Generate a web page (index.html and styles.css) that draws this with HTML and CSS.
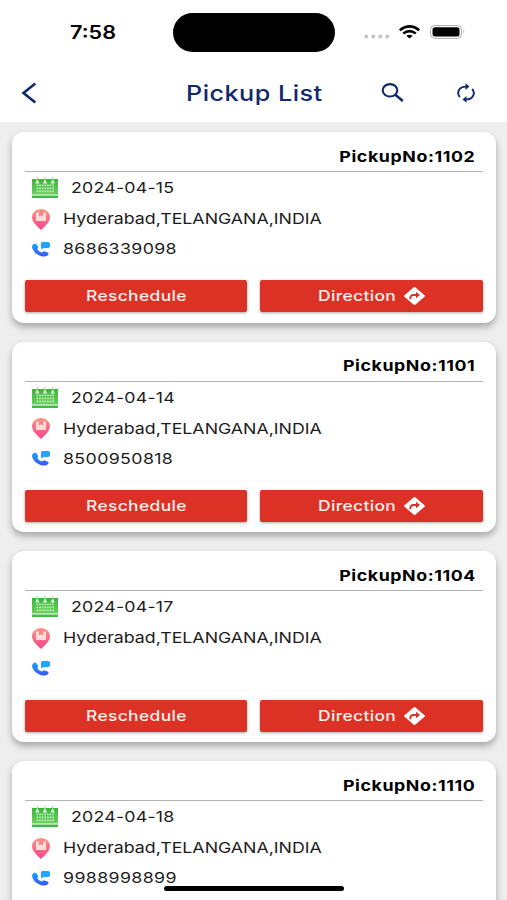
FILE: index.html
```
<!DOCTYPE html>
<html lang="en">
<head>
<meta charset="utf-8">
<title>Pickup List</title>
<link rel="stylesheet" href="styles.css">
</head>
<body>
<svg class="defs" width="0" height="0" aria-hidden="true">
  <defs>
    <linearGradient id="green" x1="0" y1="0" x2="0" y2="1"><stop offset="0" stop-color="#38b53d"/><stop offset="1" stop-color="#6ccf5c"/></linearGradient>
    <linearGradient id="pink" x1="0" y1="0" x2="0" y2="1"><stop offset="0" stop-color="#fa9583"/><stop offset="1" stop-color="#f8438c"/></linearGradient>
    <linearGradient id="blue" x1="0" y1="0" x2="0" y2="1"><stop offset="0" stop-color="#17a2ff"/><stop offset="1" stop-color="#3b55f5"/></linearGradient>
    <symbol id="calendar" viewBox="0 0 26 21">
      <path d="M0 2h26v15.500H0z" fill="url(#green)"/>
      <path d="M0 18.500h26V21H0z" fill="#43b947"/>
      <path d="M3.300 6.500 5.300 1.500 7.300 6.500zM11 6.500 13 1.500 15 6.500zM18.700 6.500l2-5 2 5z" fill="#e8f9e5"/>
      <path d="M5.300 0v4M13 0v4M20.700 0v4" stroke="#8cda84" stroke-width="1"/>
      <path d="M4.500 8.300h17.500M4.500 11.300h17.500M4.500 14.300h17.500" stroke="#b9eab2" stroke-width="1.800" stroke-dasharray="1.800 .8"/>
    </symbol>
    <symbol id="pin" viewBox="0 0 18 21">
      <path d="M9 0C4 0 0 3.700 0 8.200 0 13.200 5 17 9 21c4-4 9-7.800 9-12.800C18 3.700 14 0 9 0z" fill="url(#pink)"/>
      <path d="M4 3.500h3v4l2-1.300 2 1.300v-4h3V12H4z" fill="#ffdcd8"/>
    </symbol>
    <symbol id="phone" viewBox="0 0 18 15">
      <path d="M.5 3.200C1.800 1.500 3.900 1.300 5 3l1 1.700c.5 1-.8 1.700-.6 2.300.6 1.600 2.600 3 4.500 3.400.7.100 1.400-1.300 2.600-1l3.200 1.100c1.500.8.9 2.400-.5 3.300-1.600 1.200-5.700 1-8.600-.8C2.100 11-1.200 5.500.5 3.200z" fill="url(#blue)"/>
      <path d="M10.500 0H16c1.300 0 2 .8 2 2v2c0 1.300-.8 2-2 2h-4.300L9.400 7.600 9 5.500V2c0-1.200.4-2 1.500-2z" fill="#1ca6ff"/>
    </symbol>
    <symbol id="turn" viewBox="0 0 21 18">
      <path d="M9.500.5q1-.8 2 0l9 7.700q.9.800 0 1.600l-9 7.700q-1 .8-2 0l-9-7.700q-.9-.8 0-1.600z" fill="#fff"/>
      <path d="M6.300 12.200Q6 8 9.500 8H13" fill="none" stroke="#dc3226" stroke-width="1.900"/>
      <path d="M12 4.800 16 8 12 11.200z" fill="#dc3226"/>
    </symbol>
  </defs>
</svg>
<div class="screen">
  <header class="top">
    <div class="status">
      <div class="clock"><span class="t">7:58</span></div>
      <div class="island"></div>
      <svg class="signals" width="102" height="16" viewBox="0 0 102 16">
        <g fill="#c5c5c5"><circle cx="2.300" cy="12.500" r="2"/><circle cx="9.300" cy="12.500" r="2"/><circle cx="16.300" cy="12.500" r="2"/><circle cx="23.300" cy="12.500" r="2"/></g>
        <g fill="none" stroke="#000" stroke-width="2.600"><path d="M35.800 6.200Q45.500-1.400 55.200 6.200"/><path d="M39.200 9.500Q45.500 4.600 51.800 9.500"/></g>
        <path d="M42.300 11.800Q45.500 9.600 48.700 11.800L45.500 14.500z"/>
        <rect x="66.500" y="1.500" width="31" height="12.800" rx="4" fill="#fff" stroke="#adadad"/>
        <rect x="68.500" y="3.200" width="27" height="9.400" rx="2.500"/>
        <path d="M99.500 6q1.700 1.800 0 3.600z" fill="#888"/>
      </svg>
    </div>
    <div class="nav">
      <svg class="back" width="16" height="22" viewBox="0 0 16 22"><path d="M14.300 1.500 2.500 11 14.300 20.500" fill="none" stroke="#10286c" stroke-width="2.600"/></svg>
      <h1 class="title"><span class="t">Pickup List</span></h1>
      <svg class="search" width="24" height="20" viewBox="0 0 24 20"><ellipse cx="9" cy="7.300" rx="7.300" ry="6.200" fill="none" stroke="#10286c" stroke-width="2.100"/><path d="m14.300 11.800 7.500 6.200" stroke="#10286c" stroke-width="2.600"/></svg>
      <svg class="sync" width="20" height="20" viewBox="0 0 20 20"><g fill="none" stroke="#10286c" stroke-width="1.900"><path d="M3.800 14C.2 10 2.800 3.600 10 3.600"/><path d="M16.200 6c3.600 4 1 10.400-6.200 10.400"/></g><path d="M9.500.3 13.500 3.600 9.500 7zM10.500 13 6.500 16.400l4 3.400z" fill="#10286c"/></svg>
    </div>
  </header>
  <main class="list">
    <article class="card">
      <div class="number"><span class="t">PickupNo:1102</span></div>
      <div class="row date"><svg class="cal"><use href="#calendar"/></svg><span class="t">2024-04-15</span></div>
      <div class="row place"><svg class="pin"><use href="#pin"/></svg><span class="t">Hyderabad,TELANGANA,INDIA</span></div>
      <div class="row call"><svg class="tel"><use href="#phone"/></svg><span class="t">8686339098</span></div>
      <div class="actions"><button class="resched"><span class="t">Reschedule</span></button><button class="direct"><span class="t">Direction</span><svg class="turn"><use href="#turn"/></svg></button></div>
    </article>
    <article class="card">
      <div class="number"><span class="t">PickupNo:1101</span></div>
      <div class="row date"><svg class="cal"><use href="#calendar"/></svg><span class="t">2024-04-14</span></div>
      <div class="row place"><svg class="pin"><use href="#pin"/></svg><span class="t">Hyderabad,TELANGANA,INDIA</span></div>
      <div class="row call"><svg class="tel"><use href="#phone"/></svg><span class="t">8500950818</span></div>
      <div class="actions"><button class="resched"><span class="t">Reschedule</span></button><button class="direct"><span class="t">Direction</span><svg class="turn"><use href="#turn"/></svg></button></div>
    </article>
    <article class="card">
      <div class="number"><span class="t">PickupNo:1104</span></div>
      <div class="row date"><svg class="cal"><use href="#calendar"/></svg><span class="t">2024-04-17</span></div>
      <div class="row place"><svg class="pin"><use href="#pin"/></svg><span class="t">Hyderabad,TELANGANA,INDIA</span></div>
      <div class="row call"><svg class="tel"><use href="#phone"/></svg></div>
      <div class="actions"><button class="resched"><span class="t">Reschedule</span></button><button class="direct"><span class="t">Direction</span><svg class="turn"><use href="#turn"/></svg></button></div>
    </article>
    <article class="card">
      <div class="number"><span class="t">PickupNo:1110</span></div>
      <div class="row date"><svg class="cal"><use href="#calendar"/></svg><span class="t">2024-04-18</span></div>
      <div class="row place"><svg class="pin"><use href="#pin"/></svg><span class="t">Hyderabad,TELANGANA,INDIA</span></div>
      <div class="row call"><svg class="tel"><use href="#phone"/></svg><span class="t">9988998899</span></div>
    </article>
  </main>
  <div class="home"></div>
</div>
</body>
</html>
```
FILE: styles.css
```
* { box-sizing: border-box; }
body { margin: 0; font-family: Inter, "Liberation Sans", sans-serif; color: #1c1c1c; }
.defs { position: absolute; }
svg { display: block; flex: none; }
.screen { position: relative; width: 507px; height: 900px; overflow: hidden; background: #eeeeee; }
.top { height: 122px; background: #fff; }
.status { display: flex; height: 64px; align-items: center; }
.t { display: inline-block; white-space: nowrap; transform: scaleX(1.2); transform-origin: left center; }
.clock { width: 173px; padding-left: 70px; font-size: 18px; font-weight: 600; color: #000; }
.island { width: 162px; height: 39px; border-radius: 20px; background: #000; }
.signals { margin-left: 29px; }
.nav { display: flex; height: 58px; align-items: center; }
.back { margin-left: 21px; }
.title { width: 194px; margin: 1px 0 0 149px; font-size: 21px; line-height: 28px; font-weight: 500; letter-spacing: .4px; color: #10286c; }
.search { margin-left: 1px; }
.sync { margin-left: 51px; }
.list { display: flex; flex-direction: column; gap: 19.200px; padding: 10px 11.500px 0 12.200px; }
.card { height: 190.500px; flex: none; padding: 0 13px; border-radius: 12px; background: #fff; box-shadow: 0 4px 7px rgba(0,0,0,.3); }
.number { display: flex; justify-content: flex-end; height: 40px; padding: 14.500px 7px 0 0; border-bottom: 1.500px solid #b3b3b3; font-size: 14.800px; line-height: 20px; font-weight: 700; letter-spacing: .5px; color: #000; }
.number .t { transform-origin: right center; }
.row { display: flex; align-items: center; padding-left: 6.800px; font-size: 14.800px; line-height: 20px; }
.row .t { margin-left: .4px; }
.date { height: 32px; gap: 13px; letter-spacing: .18px; }
.place { height: 30px; gap: 13px; }
.call { height: 30px; gap: 13px; letter-spacing: .32px; }
.cal { width: 26px; height: 21px; margin-bottom: 1px; }
.pin { width: 18px; height: 21px; }
.tel { width: 18px; height: 15px; }
.actions { display: flex; gap: 13px; margin-top: 6.300px; padding-top: 9px; border-top: 1px solid #fafafa; }
button { flex: 1 1 0; min-width: 0; display: flex; align-items: center; justify-content: flex-start; height: 32px; padding: 0; border: 0; border-radius: 2px; background: #dc3226; box-shadow: 0 1px 3px rgba(0,0,0,.35); color: #fff0ee; font: 500 14.500px/20px Inter, "Liberation Sans", sans-serif; letter-spacing: .3px; }
.actions .resched .t { margin-left: 60.500px; }
.actions .direct .t { width: 86px; margin-left: 57.500px; text-align: left; }
.turn { width: 21px; height: 18px; }
.home { position: absolute; left: 164px; top: 886px; width: 180px; height: 5px; border-radius: 3px; background: #000; }
```
